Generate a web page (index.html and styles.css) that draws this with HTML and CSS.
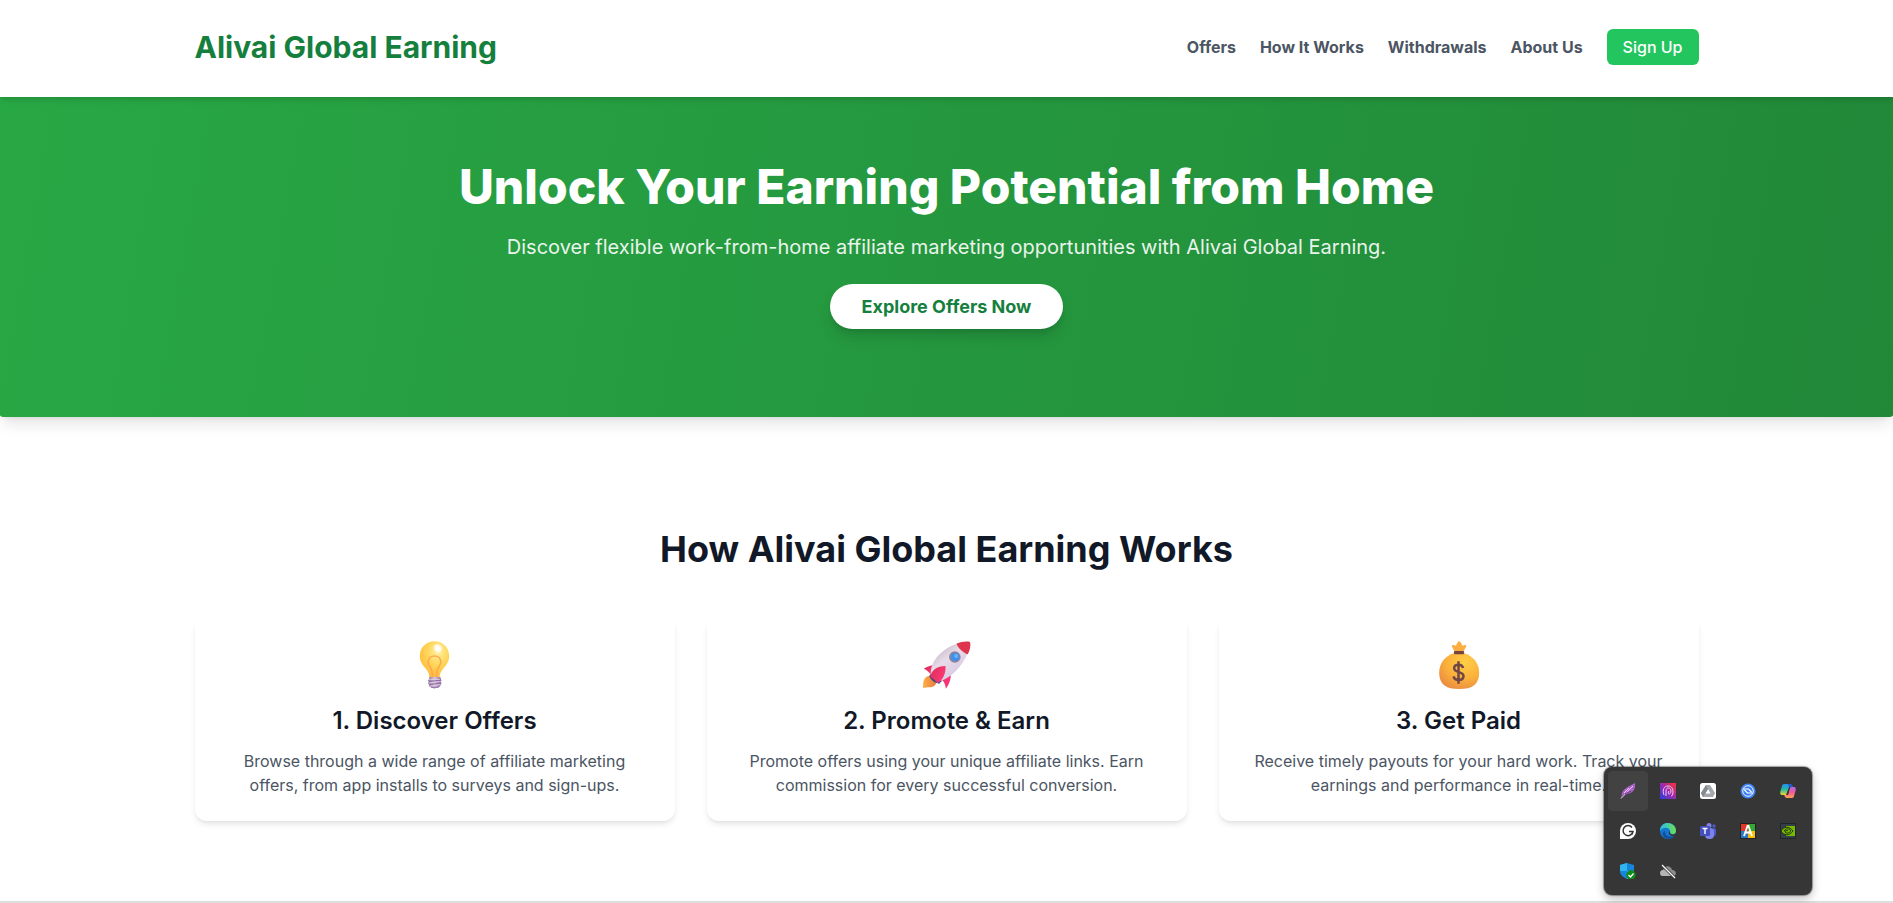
FILE: index.html
```html
<!DOCTYPE html>
<html lang="en">
<head>
<meta charset="utf-8">
<title>Alivai Global Earning</title>
<link rel="stylesheet" href="styles.css">
</head>
<body>
<header class="header">
  <div class="container header-row">
    <div class="brand">Alivai Global Earning</div>
    <nav class="nav">
      <a>Offers</a><a>How It Works</a><a>Withdrawals</a><a>About Us</a><a class="signup">Sign Up</a>
    </nav>
  </div>
</header>
<section class="hero">
  <h1>Unlock Your Earning Potential from Home</h1>
  <p>Discover flexible work-from-home affiliate marketing opportunities with Alivai Global Earning.</p>
  <a class="cta">Explore Offers Now</a>
</section>
<section class="how">
  <div class="container">
    <h2>How Alivai Global Earning Works</h2>
    <div class="cards">
      <article class="card">
        <svg class="emoji" viewBox="32.5 47 144 144">
          <defs>
            <radialGradient id="bulb" cx=".62" cy=".3" r=".75"><stop offset="0" stop-color="#fff0a0"/><stop offset=".5" stop-color="#ffd558"/><stop offset="1" stop-color="#ffb636"/></radialGradient>
            <linearGradient id="screw" x2="1"><stop offset="0" stop-color="#8a759b"/><stop offset=".5" stop-color="#d8c4d6"/><stop offset="1" stop-color="#8c68a8"/></linearGradient>
            <radialGradient id="shine"><stop offset="0" stop-color="#fff"/><stop offset=".5" stop-color="#fff" stop-opacity=".85"/><stop offset="1" stop-color="#fff" stop-opacity="0"/></radialGradient>
          </defs>
          <path d="M103 48c-25 0-44 19-44 44 0 17 8 27 18 38 8 9 10 16 11 26h30c1-10 3-17 11-26 10-11 18-21 18-38 0-25-19-44-44-44z" fill="url(#bulb)"/>
          <path d="M97 155c0-17-3-25-8-32-4-5-5-9-5-13 0-11 8-18 19-18s19 7 19 18c0 4-1 8-5 13-5 7-8 15-8 32" fill="none" stroke="#ffa94f" stroke-width="5"/>
          <ellipse cx="113" cy="69" rx="15" ry="17" fill="url(#shine)" transform="rotate(-45 113 69)"/>
          <path d="M87 155h34l1 6 2 4-2 5 2 4-5 10-10 3-6 4-7-4-10-4 1-5-4-4 3-5-3-4 4-4z" fill="url(#screw)"/>
          <path d="M86 163l34-1M86 173l36-5M88 183l33-6" stroke="#e3cfdf" stroke-width="2.500"/>
          <path d="M86 168l35-3M87 178l34-5M92 186h24" stroke="#8260a5" stroke-width="2.500"/>
        </svg>
        <h3>1. Discover Offers</h3>
        <p>Browse through a wide range of affiliate marketing offers, from app installs to surveys and sign-ups.</p>
      </article>
      <article class="card">
        <svg class="emoji" viewBox="38.5 47 144 144">
          <defs>
            <linearGradient id="body" x1=".2" y1=".2" x2=".7" y2=".8"><stop offset="0" stop-color="#c9bccb"/><stop offset=".4" stop-color="#e8dcea"/><stop offset="1" stop-color="#d8cbe3"/></linearGradient>
            <linearGradient id="fin" x2="1" y2=".6"><stop offset="0" stop-color="#d92c5a"/><stop offset="1" stop-color="#ff3b76"/></linearGradient>
            <linearGradient id="flame" x2="1"><stop offset="0" stop-color="#ffae48"/><stop offset="1" stop-color="#e77d3e"/></linearGradient>
          </defs>
          <path d="M39 189c-1-18 1-29 10-35 8-5 17-1 22 6 6 9 10 14 2 21-10 8-23 1-34 8z" fill="url(#flame)"/>
          <path d="M41 130c10-6 20-10 30-11l17 8-24 23c-5-8-13-15-23-20z" fill="url(#fin)"/>
          <path d="M97 165l17-22 8 9c-1 14-7 28-15 38-1-10-4-18-10-25z" fill="#f83273"/>
          <path d="M57 152l8-10 32 23-10 10c-13-2-24-9-30-23z" fill="#414782"/>
          <path d="M62 146c-2-40 36-80 87-94 10-2 22-3 29-2 3 7 1 18-4 29-17 45-53 79-83 88-12-2-23-9-29-21z" fill="url(#body)"/>
          <path d="M139 55c13-5 30-8 40-5 4 9 0 24-6 37-8-2-29-17-34-32z" fill="#df344d"/>
          <circle cx="134" cy="95" r="17.500" fill="#8e839b"/>
          <circle cx="135" cy="95" r="12" fill="#3c91ef"/><circle cx="138" cy="92" r="6" fill="#65b5fb"/>
          <path d="M60 155c5-21 19-33 46-33 2 24-9 42-23 52-6-8-14-15-23-19z" fill="url(#fin)"/>
        </svg>
        <h3>2. Promote &amp; Earn</h3>
        <p>Promote offers using your unique affiliate links. Earn commission for every successful conversion.</p>
      </article>
      <article class="card">
        <svg class="emoji" viewBox="32.5 47 144 144">
          <defs>
            <radialGradient id="bag" cx=".65" cy=".25" r=".85"><stop offset="0" stop-color="#ffce45"/><stop offset=".55" stop-color="#fbb03b"/><stop offset="1" stop-color="#e88841"/></radialGradient>
          </defs>
          <path d="M91 79l-8-16c-1-4 2-5 6-4l6 2 6-11q4-4 8 0l6 11 6-2c5-1 7 1 5 4l-8 16z" fill="#fdae40"/>
          <path d="M90 84h29c27 7 46 30 46 58 0 34-20 49-60 49s-60-15-60-49c0-28 18-51 45-58z" fill="url(#bag)"/>
          <rect x="89" y="77" width="31" height="10" rx="4" fill="#75453c"/>
          <path d="M117 128c-2-7-7-10-14-10-8 0-13 4-13 11 0 15 28 8 28 23 0 8-6 12-15 12-8 0-13-4-15-11M103 108v67" fill="none" stroke="#704646" stroke-width="7.500"/>
        </svg>
        <h3>3. Get Paid</h3>
        <p>Receive timely payouts for your hard work. Track your earnings and performance in real-time.</p>
      </article>
    </div>
  </div>
</section>
<section class="next"></section>

<aside class="tray">
  <span class="slot active"><svg viewBox="0 0 16 16"><path d="M1 16L2 10C4 5 8 4 15 0c1 6-2 10-8 11l-4 1z" fill="#aa62c9"/><path d="M1 15.500L13 3M4 10l5-5" stroke="#ecd0f6" stroke-width="1"/><path d="M5 11l6-3" stroke="#693385"/></svg></span>
  <span class="slot"><svg viewBox="0 0 16 16"><defs><linearGradient id="pg" x1="0" y1="1" x2="1" y2="0"><stop stop-color="#283ce0"/><stop offset=".5" stop-color="#9a2bae"/><stop offset="1" stop-color="#ff3430"/></linearGradient></defs><path fill="url(#pg)" d="M0 0h16v16H0z"/><path d="M4 12C2 7 4 3 8 3s5 3 5 6-1 4-2 4M6 13V8c0-2 1-3 2.500-3S11 6 11 8s-1 3-2 3-1-2 0-3" fill="none" stroke="#f3c9f5"/></svg></span>
  <span class="slot"><svg viewBox="0 0 16 16"><rect width="16" height="16" rx="2.500" fill="#fff"/><path d="M6 2h4l5 8-2 4H3l-2-4z" fill="#a4a8ad"/><path d="M8 6l2.500 4.500h-5z" fill="#fff"/><path d="M6 2l2 4-5 8-2-4z" fill="#858b92"/></svg></span>
  <span class="slot"><svg viewBox="0 0 16 16"><circle cx="8" cy="8" r="7.500" fill="#3f84f4"/><circle cx="8" cy="8" r="5.300" fill="none" stroke="#e6f0ff"/><path d="M3.500 6h5l3 3M12.500 10h-5l-3-3" fill="none" stroke="#fff" stroke-width="1.100"/></svg></span>
  <span class="slot"><svg viewBox="0 0 16 16"><defs><linearGradient id="c1" x2="0" y2="1"><stop stop-color="#258df3"/><stop offset=".5" stop-color="#25bca0"/><stop offset="1" stop-color="#f2d330"/></linearGradient><linearGradient id="c2" x2="0" y2="1"><stop stop-color="#ae65ee"/><stop offset=".5" stop-color="#f65b96"/><stop offset="1" stop-color="#ffa052"/></linearGradient></defs><path d="M4 1h6c2 0 2 2 3 3H9L7 11c0 1-1 1-2 1H2c-2 0-2-2-1.500-4L2 3c0-1 1-2 2-2z" fill="url(#c1)"/><path d="M12 15H7c-2 0-2-2-3-3h4l2-7c0-1 1-1 2-1h2c2 0 2 2 1.500 4L14 13c0 1-1 2-2 2z" fill="url(#c2)"/><path d="M8 1h2c2 0 2 2 3 3H9z" fill="#2458cf"/><path d="M7.500 8l2-4L8 12H6z" fill="#363636"/></svg></span>
  <span class="slot"><svg viewBox="0 0 16 16"><path d="M8 0a8 8 0 110 16H0V8a8 8 0 018-8z" fill="#fff"/><path d="M12 4.500A5 5 0 1013 8.500H9M13 8.500l-1 3" fill="none" stroke="#333" stroke-width="1.500"/></svg></span>
  <span class="slot"><svg viewBox="0 0 16 16"><defs><linearGradient id="e1" x2="1"><stop stop-color="#2bb9ee"/><stop offset="1" stop-color="#6be052"/></linearGradient></defs><circle cx="8" cy="8" r="8" fill="#1675ce"/><path d="M0 8c0-11 16-10 16 0 0 4-6 4-6 1 1-5-7-6-10-1z" fill="url(#e1)"/><path d="M10 8c-1 3 3 5 6 2v3c-4 1-8-1-7-4z" fill="#363636"/><path d="M5 8c-1 4 3 7 9 5-2 3-6 3-8 2-4-2-4-6-1-7z" fill="#104b98"/></svg></span>
  <span class="slot"><svg viewBox="0 0 16 16"><circle cx="9" cy="2.500" r="2.500" fill="#7b83eb"/><circle cx="14" cy="3" r="1.700" fill="#5059c9"/><rect x="12" y="5" width="4" height="8" rx="2" fill="#5059c9"/><rect x="5" y="5" width="9" height="11" rx="4" fill="#7b83eb"/><rect y="3" width="10" height="10" rx="1" fill="#4650bd"/><path d="M2.500 5.500h5M5 5.500v5.500" stroke="#fff" stroke-width="1.400"/></svg></span>
  <span class="slot"><svg viewBox="0 0 16 16"><path fill="#222" d="M0 0h16v16H0z"/><path fill="#df3827" d="M1 1h7v7H1z"/><path fill="#34a832" d="M8 1h7v7H8z"/><path fill="#2c78c9" d="M1 8h7v7H1z"/><path fill="#f8bd0d" d="M8 8h7v7H8z"/><path d="M4 13L7.500 3h1L12 13M5.500 9.500h5" fill="none" stroke="#fff" stroke-width="1.800"/></svg></span>
  <span class="slot"><svg viewBox="0 0 16 16"><path fill="#1f262b" d="M0 0h16v16H0z"/><path fill="#343e46" d="M1 1h14v14H1z"/><path d="M6 3h9v10H6z" fill="#76b900"/><path d="M1 8c3-5 8-5 12 0-4 5-9 5-12 0z" fill="#76b900" stroke="#26350e"/><path d="M4 8c2-3 5-3 7 0-2 2-4 3-6 1 0-2 2-2 3-1" fill="none" stroke="#26350e"/></svg></span>
  <span class="slot"><svg viewBox="0 0 16 16"><path d="M7 0l7 2v6c0 4-3 6-7 8-4-2-7-4-7-8V2z" fill="#1686d9"/><path d="M7 0v8H0V2zM7 8h7c0 4-3 6-7 8z" fill="#32b5ef"/><circle cx="11" cy="12" r="4.700" fill="#108a18"/><path d="M8.500 12l2 2 3-3.500" fill="none" stroke="#fff" stroke-width="1.300"/></svg></span>
  <span class="slot"><svg viewBox="0 0 16 16"><path d="M3 13c-4 0-4-6 0-6 1-5 8-5 9 0 5 0 5 6 1 6z" fill="#8c8c8c"/><path d="M2 13c-3-1-2-6 1-6 4 0 5 3 8 6z" fill="#b5b5b5"/><path d="M2 2l13 13" stroke="#363636" stroke-width="2.600"/><path d="M2 2l13 13" stroke="#fff" stroke-width="1.200"/></svg></span>
</aside>
</body>
</html>
```
FILE: styles.css
```css
* { box-sizing: border-box; }
body { margin: 0; height: 903px; overflow: hidden; background: #fff; font-family: Inter, sans-serif; font-size: 16px; line-height: 24px; color: #4b5563; }
h1, h2, h3, p { margin: 0; }
.container { max-width: 1536px; margin: 0 auto; padding: 0 16px; }
.header { position: relative; z-index: 1; height: 97px; background: #fff; box-shadow: 0 4px 6px -1px rgba(0,0,0,.1), 0 2px 4px -2px rgba(0,0,0,.1); }
.header-row { height: 94px; display: flex; align-items: center; justify-content: space-between; }
.brand { font-size: 30px; line-height: 36px; font-weight: 700; color: #15803d; }
.nav { display: flex; align-items: center; gap: 24px; font-weight: 700; }
.signup { padding: 6px 16px; border-radius: 6px; background: #22c55e; color: #fff; font-weight: 500; }
.hero { height: 320px; padding-top: 64px; text-align: center; color: #fff; background: linear-gradient(100deg, #28a745, #218838); border-radius: 0 0 5px 5px / 0 0 2px 2px; box-shadow: 0 10px 15px -3px rgba(0,0,0,.1), 0 4px 6px -4px rgba(0,0,0,.1); display: flex; flex-direction: column; align-items: center; }
.hero h1 { font-size: 48px; line-height: 52px; font-weight: 800; }
.hero p { margin-top: 20px; font-size: 20px; line-height: 28px; opacity: .9; }
.cta { margin-top: 23px; padding: 8px 32px; font-size: 18px; line-height: 29px; font-weight: 700; color: #15803d; background: #fff; border-radius: 999px; box-shadow: 0 10px 15px -3px rgba(0,0,0,.15), 0 4px 6px -4px rgba(0,0,0,.15); }
.how { height: 484px; padding-top: 112px; }
.how h2 { font-size: 36px; line-height: 40px; font-weight: 700; text-align: center; color: #111827; }
.cards { margin-top: 48px; display: grid; grid-template-columns: repeat(3, 1fr); gap: 32px; }
.card { height: 204px; padding: 24px 32px; border-radius: 12px; background: #fff; text-align: center; box-shadow: 0 4px 6px -1px rgba(0,0,0,.1), 0 2px 4px -2px rgba(0,0,0,.06); }
.emoji { display: block; width: 48px; height: 48px; margin: 0 auto; }
.card h3 { margin-top: 16px; font-size: 24px; line-height: 32px; font-weight: 600; color: #111827; }
.card p { margin-top: 12px; }
.next { height: 2px; background: #dedede; }
.tray { position: absolute; z-index: 2; left: 1604px; top: 767px; width: 208px; height: 128px; padding: 4px; display: grid; grid-template-columns: repeat(5, 40px); grid-template-rows: repeat(3, 40px); background: #363636; border-radius: 8px; box-shadow: 0 0 1px 1px rgba(0,0,0,.35), 0 4px 10px rgba(0,0,0,.25); }
.slot { display: flex; align-items: center; justify-content: center; border-radius: 4px; }
.active { background: #424242; }
.slot svg { width: 16px; height: 16px; }
```
